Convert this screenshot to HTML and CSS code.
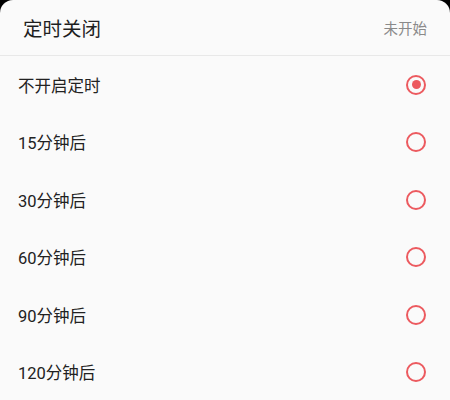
FILE: index.html
```html
<!DOCTYPE html>
<html lang="zh-CN">
  <head>
    <meta charset="UTF-8" />
    <meta name="viewport" content="width=device-width, initial-scale=1.0" />
    <title>定时关闭</title>
    <link rel="stylesheet" href="styles.css">
  </head>
  <body>
    <div class="sheet">
      <div class="sheet-header">
        <div class="title">定时关闭</div>
        <div class="status">未开始</div>
      </div>
      <ul class="options">
        <li class="option"><span>不开启定时</span><span class="radio checked"></span></li>
        <li class="option"><span>15分钟后</span><span class="radio"></span></li>
        <li class="option"><span>30分钟后</span><span class="radio"></span></li>
        <li class="option"><span>60分钟后</span><span class="radio"></span></li>
        <li class="option"><span>90分钟后</span><span class="radio"></span></li>
        <li class="option"><span>120分钟后</span><span class="radio"></span></li>
      </ul>
    </div>
  </body>
</html>
```

FILE: styles.css
```css
* {
  margin: 0;
  padding: 0;
  box-sizing: border-box;
}

body {
  font-family: Roboto, "Noto Sans CJK SC", sans-serif;
  background-color: #000;
  width: 450px;
  height: 400px;
  overflow: hidden;
}

.sheet {
  background-color: #fafafa;
  border-radius: 13px 13px 0 0;
  height: 400px;
}

.sheet-header {
  display: flex;
  justify-content: space-between;
  align-items: center;
  height: 56px;
  padding: 0 23px 0 23px;
  border-bottom: 1px solid #e8e8e8;
}

.title {
  font-size: 19.5px;
  color: #1e1e1e;
}

.status {
  font-size: 14.5px;
  color: #8a8a8a;
}

.options {
  list-style: none;
}

.option {
  display: flex;
  justify-content: space-between;
  align-items: center;
  height: 57.5px;
  padding: 0 24px 0 18px;
  font-size: 16.5px;
  color: #222;
}

.radio {
  width: 20px;
  height: 20px;
  border: 2px solid #ec5a5f;
  border-radius: 50%;
  display: flex;
  align-items: center;
  justify-content: center;
}

.radio.checked::after {
  content: "";
  width: 9px;
  height: 9px;
  border-radius: 50%;
  background-color: #ec5a5f;
}
```
